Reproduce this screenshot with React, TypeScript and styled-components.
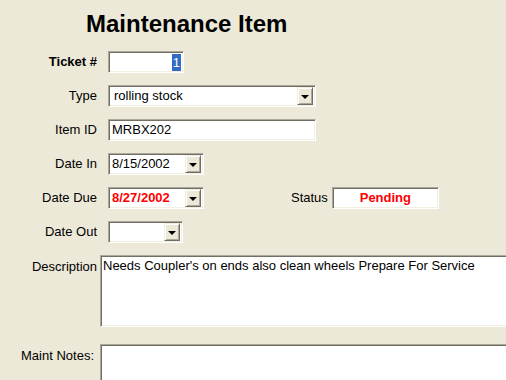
import React from "react";
import styled, { createGlobalStyle, css } from "styled-components";

const GlobalStyle = createGlobalStyle`
  html, body {
    margin: 0;
    padding: 0;
    background: #ECE9D8;
    overflow: hidden;
  }
  body {
    font-family: "Liberation Sans", Arial, sans-serif;
    color: #000;
  }
`;

const Page = styled.div`
  width: 506px;
  height: 380px;
  overflow: hidden;
  padding-top: 10px;
  box-sizing: border-box;
`;

const Title = styled.h1`
  margin: 0 0 13px 86px;
  font-size: 24px;
  line-height: 28px;
  font-weight: bold;
  white-space: nowrap;
`;

const Form = styled.div`
  display: flex;
  flex-direction: column;
  gap: 12px;
`;

const Row = styled.div<{ $top?: boolean; $mt?: number }>`
  display: flex;
  align-items: ${(p) => (p.$top ? "flex-start" : "center")};
  margin-top: ${(p) => p.$mt ?? 0}px;
`;

const Label = styled.div<{ $bold?: boolean; $pr?: number; $pt?: number }>`
  width: 97px;
  flex: none;
  box-sizing: border-box;
  text-align: right;
  font-size: 13px;
  line-height: 16px;
  font-weight: ${(p) => (p.$bold ? "bold" : "normal")};
  padding-right: ${(p) => p.$pr ?? 0}px;
  padding-top: ${(p) => p.$pt ?? 0}px;
  white-space: nowrap;
`;

const InlineLabel = styled.div<{ $ml: number }>`
  margin-left: ${(p) => p.$ml}px;
  margin-right: 4px;
  font-size: 13px;
  line-height: 16px;
  white-space: nowrap;
`;

const Sunken = styled.div<{ $w: number; $h?: number; $ml?: number; $top?: boolean; $justify?: string }>`
  flex: none;
  box-sizing: border-box;
  width: ${(p) => p.$w}px;
  height: ${(p) => p.$h ?? 22}px;
  margin-left: ${(p) => p.$ml ?? 11}px;
  background: #fff;
  border: 1px solid;
  border-color: #ACA899 #FFFFFF #FFFFFF #ACA899;
  box-shadow: inset 1px 1px 0 #716F64, inset -1px -1px 0 #F1EFE2;
  padding: 2px;
  display: flex;
  align-items: ${(p) => (p.$top ? "flex-start" : "center")};
  justify-content: ${(p) => p.$justify ?? "flex-start"};
  font-size: 13px;
  line-height: 16px;
  white-space: nowrap;
  overflow: hidden;
`;

const Value = styled.span<{ $pl?: number; $red?: boolean; $bold?: boolean; $grow?: boolean; $center?: boolean }>`
  padding-left: ${(p) => p.$pl ?? 1}px;
  flex: ${(p) => (p.$grow ? "1" : "none")};
  color: ${(p) => (p.$red ? "#FF0000" : "#000")};
  font-weight: ${(p) => (p.$bold ? "bold" : "normal")};
  ${(p) =>
    p.$center &&
    css`
      text-align: center;
      padding-left: 0;
    `}
`;

const Selected = styled.span`
  background: #316AC5;
  color: #fff;
  padding: 0 1px;
  line-height: 17px;
  margin-right: 0px;
`;

const DropButton = styled.div`
  flex: none;
  box-sizing: border-box;
  width: 16px;
  height: 18px;
  margin-left: auto;
  background: #ECE9D8;
  border: 1px solid;
  border-color: #F1EFE2 #716F64 #716F64 #F1EFE2;
  box-shadow: inset 1px 1px 0 #FFFFFF, inset -1px -1px 0 #ACA899;
  display: flex;
  align-items: center;
  justify-content: center;
`;

const Arrow = styled.div`
  width: 0;
  height: 0;
  border-left: 4px solid transparent;
  border-right: 4px solid transparent;
  border-top: 4px solid #000;
  margin-top: 1px;
`;

const Drop = () => (
  <DropButton>
    <Arrow />
  </DropButton>
);

export default function App() {
  return (
    <>
      <GlobalStyle />
      <Page>
        <Title>Maintenance Item</Title>
        <Form>
          <Row>
            <Label $bold>Ticket #</Label>
            <Sunken $w={76} $justify="flex-end">
              <Selected>1</Selected>
            </Sunken>
          </Row>
          <Row>
            <Label>Type</Label>
            <Sunken $w={208}>
              <Value $pl={3}>rolling stock</Value>
              <Drop />
            </Sunken>
          </Row>
          <Row>
            <Label>Item ID</Label>
            <Sunken $w={208}>
              <Value>MRBX202</Value>
            </Sunken>
          </Row>
          <Row>
            <Label>Date In</Label>
            <Sunken $w={96}>
              <Value>8/15/2002</Value>
              <Drop />
            </Sunken>
          </Row>
          <Row>
            <Label>Date Due</Label>
            <Sunken $w={96}>
              <Value $red $bold>8/27/2002</Value>
              <Drop />
            </Sunken>
            <InlineLabel $ml={87}>Status</InlineLabel>
            <Sunken $w={107} $ml={0}>
              <Value $red $bold $grow $center>Pending</Value>
            </Sunken>
          </Row>
          <Row>
            <Label>Date Out</Label>
            <Sunken $w={75}>
              <Drop />
            </Sunken>
          </Row>
          <Row $top>
            <Label $pt={4}>Description</Label>
            <Sunken $w={420} $h={72} $ml={3} $top>
              <Value $pl={0}>Needs Coupler's on ends also clean wheels Prepare For Service</Value>
            </Sunken>
          </Row>
          <Row $top $mt={5}>
            <Label $pt={4} $pr={3}>Maint Notes:</Label>
            <Sunken $w={420} $h={60} $ml={3} $top />
          </Row>
        </Form>
      </Page>
    </>
  );
}
